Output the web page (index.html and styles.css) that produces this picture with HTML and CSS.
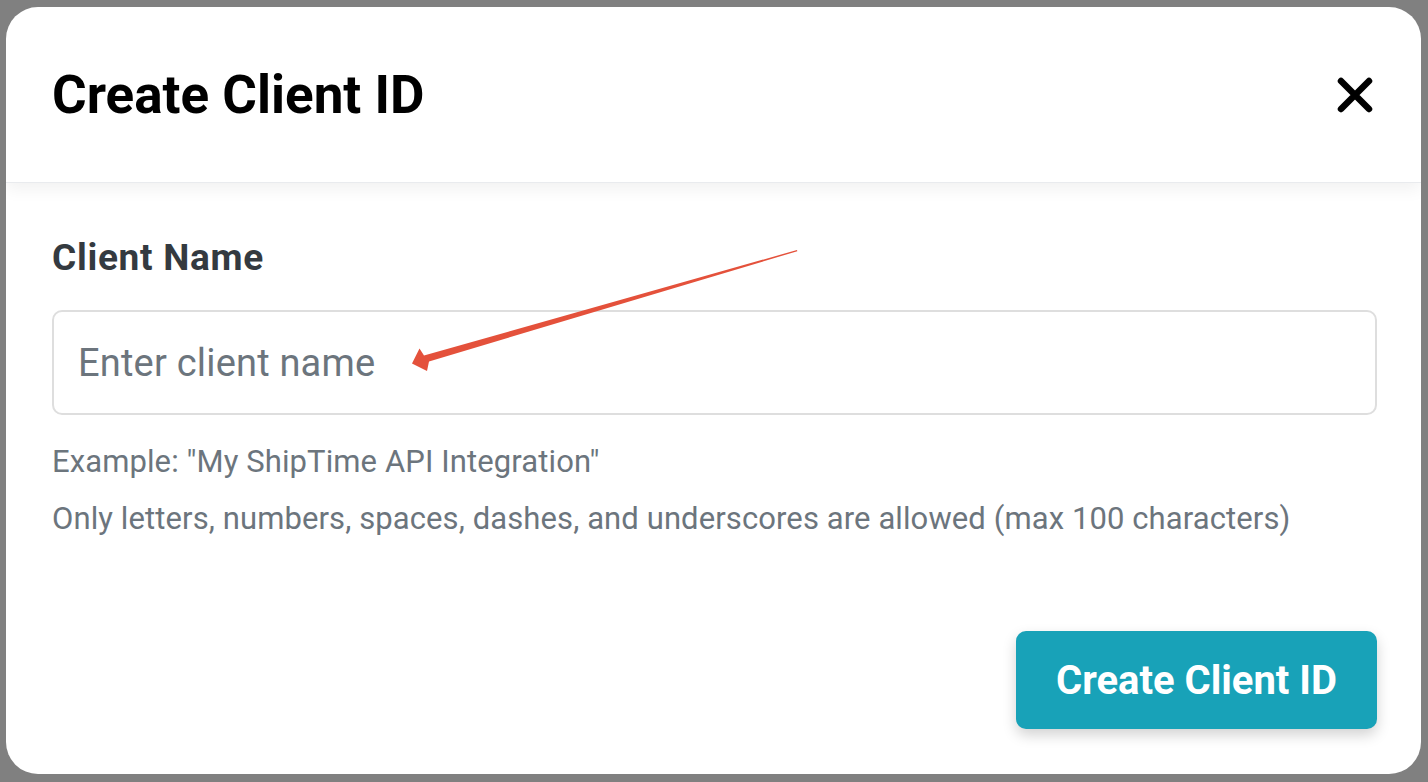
FILE: index.html
```html
<!DOCTYPE html>
<html lang="en">
<head>
<meta charset="utf-8">
<title>Create Client ID</title>
<link rel="stylesheet" href="styles.css">
</head>
<body>
<div class="backdrop">
  <div class="modal">
    <header class="modal-header">
      <h1 class="modal-title">Create Client ID</h1>
      <button class="close-btn" aria-label="Close">
        <svg width="36" height="36" viewBox="0 0 36 36"><path d="M4 4 L32 32 M32 4 L4 32" stroke="#000" stroke-width="6.5" stroke-linecap="round"/></svg>
      </button>
    </header>
    <section class="modal-body">
      <label class="field-label" for="clientName">Client Name</label>
      <input class="field-input" id="clientName" type="text" placeholder="Enter client name">
      <p class="help">Example: "My ShipTime API Integration"</p>
      <p class="help">Only letters, numbers, spaces, dashes, and underscores are allowed (max 100 characters)</p>
    </section>
    <footer class="modal-footer">
      <button class="primary-btn">Create Client ID</button>
    </footer>
  </div>
</div>
<svg class="annotation" width="1428" height="782" viewBox="0 0 1428 782">
  <polygon fill="#e4513b" points="797,250 797.3,251.2 429,361.5 427,371 412,363.5 419.5,348.5 424,355.5"/>
</svg>
</body>
</html>
```
FILE: styles.css
```css
html, body {
  margin: 0;
  padding: 0;
}
body {
  width: 1428px;
  height: 782px;
  background: #808080;
  font-family: Roboto, "Liberation Sans", Arial, sans-serif;
  overflow: hidden;
  position: relative;
}
.backdrop {
  padding: 7px 7px 8px 6px;
  box-sizing: border-box;
  height: 782px;
}
.modal {
  background: #fff;
  border-radius: 32px;
  height: 767px;
  display: flex;
  flex-direction: column;
  overflow: hidden;
}
.modal-header {
  height: 176px;
  box-sizing: border-box;
  display: flex;
  align-items: center;
  justify-content: space-between;
  padding: 0 48px 0 46px;
  border-bottom: 1px solid #e9ebee;
  box-shadow: 0 6px 16px rgba(0, 0, 0, 0.06);
  position: relative;
  z-index: 1;
}
.modal-title {
  margin: 0;
  font-size: 53px;
  font-weight: 700;
  color: #000;
  line-height: 1.2;
  padding-top: 2px;
}
.close-btn {
  background: none;
  border: 0;
  padding: 0;
  width: 36px;
  height: 36px;
  display: flex;
  align-items: center;
  justify-content: center;
  cursor: pointer;
}
.modal-body {
  display: flex;
  flex-direction: column;
  padding: 53px 44px 0 46px;
}
.field-label {
  font-size: 37px;
  font-weight: 700;
  letter-spacing: 0.7px;
  color: #343a40;
  line-height: 43px;
  margin-bottom: 31px;
  padding-top: 2px;
  margin-top: -2px;
}
.field-input {
  height: 105px;
  box-sizing: border-box;
  border: 2px solid #dedede;
  border-radius: 10px;
  padding: 0 24px;
  font-family: Roboto, "Liberation Sans", Arial, sans-serif;
  font-size: 38px;
  letter-spacing: 0.2px;
  color: #212529;
  outline: none;
  margin: 0;
}
.field-input::placeholder {
  color: #6c757d;
  opacity: 1;
}
.help {
  margin: 0;
  font-size: 31px;
  letter-spacing: 0.1px;
  line-height: 39px;
  color: #6c757d;
}
.help:first-of-type {
  margin-top: 27px;
  margin-bottom: 18px;
}
.modal-footer {
  margin-top: auto;
  display: flex;
  justify-content: flex-end;
  padding: 0 44px 45px 0;
}
.primary-btn {
  width: 361px;
  height: 98px;
  border: 0;
  border-radius: 10px;
  background: #18a2b8;
  color: #fff;
  font-family: Roboto, "Liberation Sans", Arial, sans-serif;
  font-size: 40px;
  font-weight: 700;
  box-shadow: 0 6px 14px rgba(0, 0, 0, 0.18);
  cursor: pointer;
}
.annotation {
  position: absolute;
  left: 0;
  top: 0;
  pointer-events: none;
}
```
